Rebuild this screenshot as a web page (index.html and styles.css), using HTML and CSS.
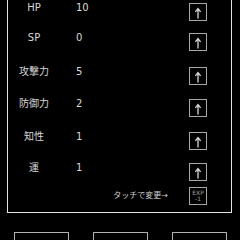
FILE: index.html
```html
<!DOCTYPE html>
<html lang="ja">
<head>
<meta charset="utf-8">
<link rel="stylesheet" href="styles.css">
</head>
<body>
<div class="frame">
  <div class="stats">
    <span class="label">HP</span><span class="value">10</span>
    <button class="up"><svg viewBox="0 0 16 16" width="16" height="16"><path d="M8 14.5V4.8M5.4 7.8L8 4.6L10.6 7.8"/></svg></button>
    <span class="label">SP</span><span class="value">0</span>
    <button class="up"><svg viewBox="0 0 16 16" width="16" height="16"><path d="M8 14.5V4.8M5.4 7.8L8 4.6L10.6 7.8"/></svg></button>
    <span class="label">攻撃力</span><span class="value">5</span>
    <button class="up"><svg viewBox="0 0 16 16" width="16" height="16"><path d="M8 14.5V4.8M5.4 7.8L8 4.6L10.6 7.8"/></svg></button>
    <span class="label">防御力</span><span class="value">2</span>
    <button class="up"><svg viewBox="0 0 16 16" width="16" height="16"><path d="M8 14.5V4.8M5.4 7.8L8 4.6L10.6 7.8"/></svg></button>
    <span class="label">知性</span><span class="value">1</span>
    <button class="up"><svg viewBox="0 0 16 16" width="16" height="16"><path d="M8 14.5V4.8M5.4 7.8L8 4.6L10.6 7.8"/></svg></button>
    <span class="label">運</span><span class="value">1</span>
    <button class="up"><svg viewBox="0 0 16 16" width="16" height="16"><path d="M8 14.5V4.8M5.4 7.8L8 4.6L10.6 7.8"/></svg></button>
    <span class="hint">タッチで変更→</span>
    <button class="exp"><span>EXP</span><span>-1</span></button>
  </div>
</div>
<div class="buttons">
  <button class="btn"></button>
  <button class="btn"></button>
  <button class="btn"></button>
</div>
</body>
</html>
```
FILE: styles.css
```css
html, body {
  margin: 0;
  padding: 0;
  background: #000;
  width: 240px;
  height: 240px;
  overflow: hidden;
  font-family: "DejaVu Sans", "Noto Sans CJK JP", sans-serif;
  color: #d8d8d8;
}

.frame {
  margin: 0 8px 0 7px;
  border: 1px solid #e4e4e4;
  border-top: 0;
  padding: 3px 24px 7px 0;
}

.stats {
  display: grid;
  grid-template-columns: 52px 1fr 18px;
  grid-template-rows: 30px 34px 32px 33px 31px 24px 18px;
  column-gap: 16px;
  align-items: start;
}

.label {
  font-size: 10px;
  line-height: 10px;
  text-align: center;
  white-space: nowrap;
}

.value {
  font-size: 10px;
  line-height: 10px;
}

.up,
.exp {
  width: 18px;
  height: 18px;
  margin: 0;
  padding: 0;
  border: 1px solid #a8a8a8;
  background: #000;
  box-sizing: border-box;
  display: flex;
  align-items: center;
  justify-content: center;
}

.up svg {
  display: block;
  fill: none;
  stroke: #d8d8d8;
  stroke-width: 1.3;
}

.hint {
  grid-column: 1 / 3;
  justify-self: end;
  align-self: center;
  font-size: 8px;
  line-height: 8px;
  margin-right: 5px;
  color: #d0d0d0;
  white-space: nowrap;
}

.exp {
  flex-direction: column;
  color: #a0a0a0;
  font-family: "DejaVu Sans", sans-serif;
  font-size: 6px;
  line-height: 6.5px;
}

.buttons {
  display: flex;
  gap: 24px;
  margin-top: 19px;
  padding-left: 14px;
}

.btn {
  width: 55px;
  height: 20px;
  margin: 0;
  padding: 0;
  border: 1px solid #b0b0b0;
  background: #000;
  box-sizing: border-box;
}
```
